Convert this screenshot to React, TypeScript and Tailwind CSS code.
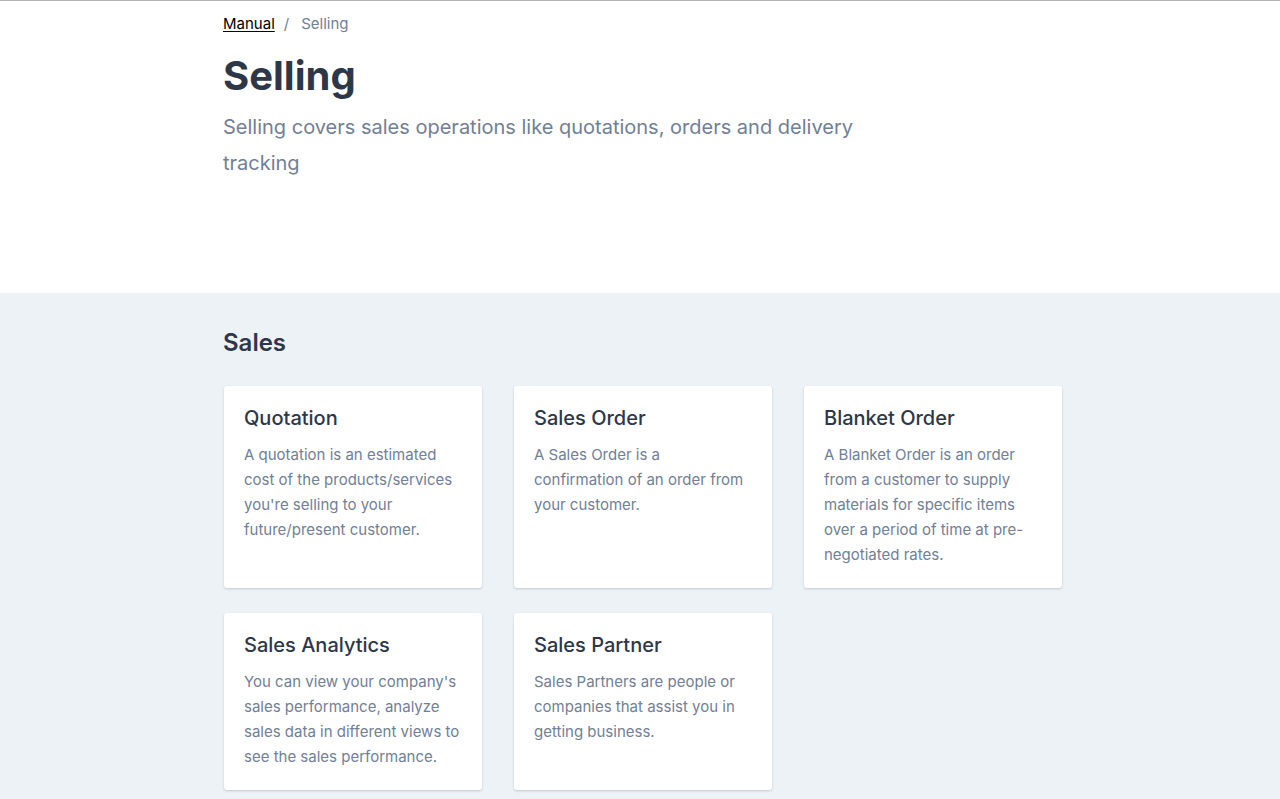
const cards = [
  {
    title: 'Quotation',
    body: "A quotation is an estimated cost of the products/services you're selling to your future/present customer.",
  },
  {
    title: 'Sales Order',
    body: 'A Sales Order is a confirmation of an order from your customer.',
  },
  {
    title: 'Blanket Order',
    body: 'A Blanket Order is an order from a customer to supply materials for specific items over a period of time at pre-negotiated rates.',
  },
  {
    title: 'Sales Analytics',
    body: "You can view your company's sales performance, analyze sales data in different views to see the sales performance.",
  },
  {
    title: 'Sales Partner',
    body: 'Sales Partners are people or companies that assist you in getting business.',
  },
];

export default function App() {
  return (
    <div className="min-h-screen border-t border-[#b5b5b5] bg-[#edf2f7] font-['Inter',sans-serif] antialiased">
      {/* page header */}
      <div className="bg-white">
        <div className="ml-[223px] w-[840px] pt-[11px] pb-[112px]">
          <nav className="flex items-center text-[15px] leading-6">
            <a href="#" className="text-black underline underline-offset-2">
              Manual
            </a>
            <span className="mx-[9px] text-[#718096]">/</span>
            <span className="ml-[3px] text-[#718096]">Selling</span>
          </nav>
          <h1 className="mt-[16px] text-[40px] font-bold leading-[48px] text-[#2d3748]">Selling</h1>
          <p className="mt-[9px] max-w-[640px] text-[20px] leading-9 text-[#718096]">
            Selling covers sales operations like quotations, orders and delivery tracking
          </p>
        </div>
      </div>

      {/* sections */}
      <div className="ml-[223px] w-[840px] pt-[34px] pb-10">
        <h2 className="text-2xl font-semibold leading-8 text-[#2d3748]">Sales</h2>
        <div className="mt-[27px] ml-px grid w-[838px] grid-cols-3 gap-x-[32px] gap-y-[25px]">
          {cards.map((c) => (
            <a
              key={c.title}
              href="#"
              className="rounded-[3px] bg-white px-5 pt-[18px] pb-[21px] shadow-[0_1px_3px_rgba(0,0,0,0.12),0_1px_2px_rgba(0,0,0,0.06)]"
            >
              <h3 className="text-[20px] font-medium leading-7 text-[#2d3748]">{c.title}</h3>
              <p className="mt-[10px] text-[15px] leading-[25px] text-[#718096]">{c.body}</p>
            </a>
          ))}
        </div>
      </div>
    </div>
  );
}
